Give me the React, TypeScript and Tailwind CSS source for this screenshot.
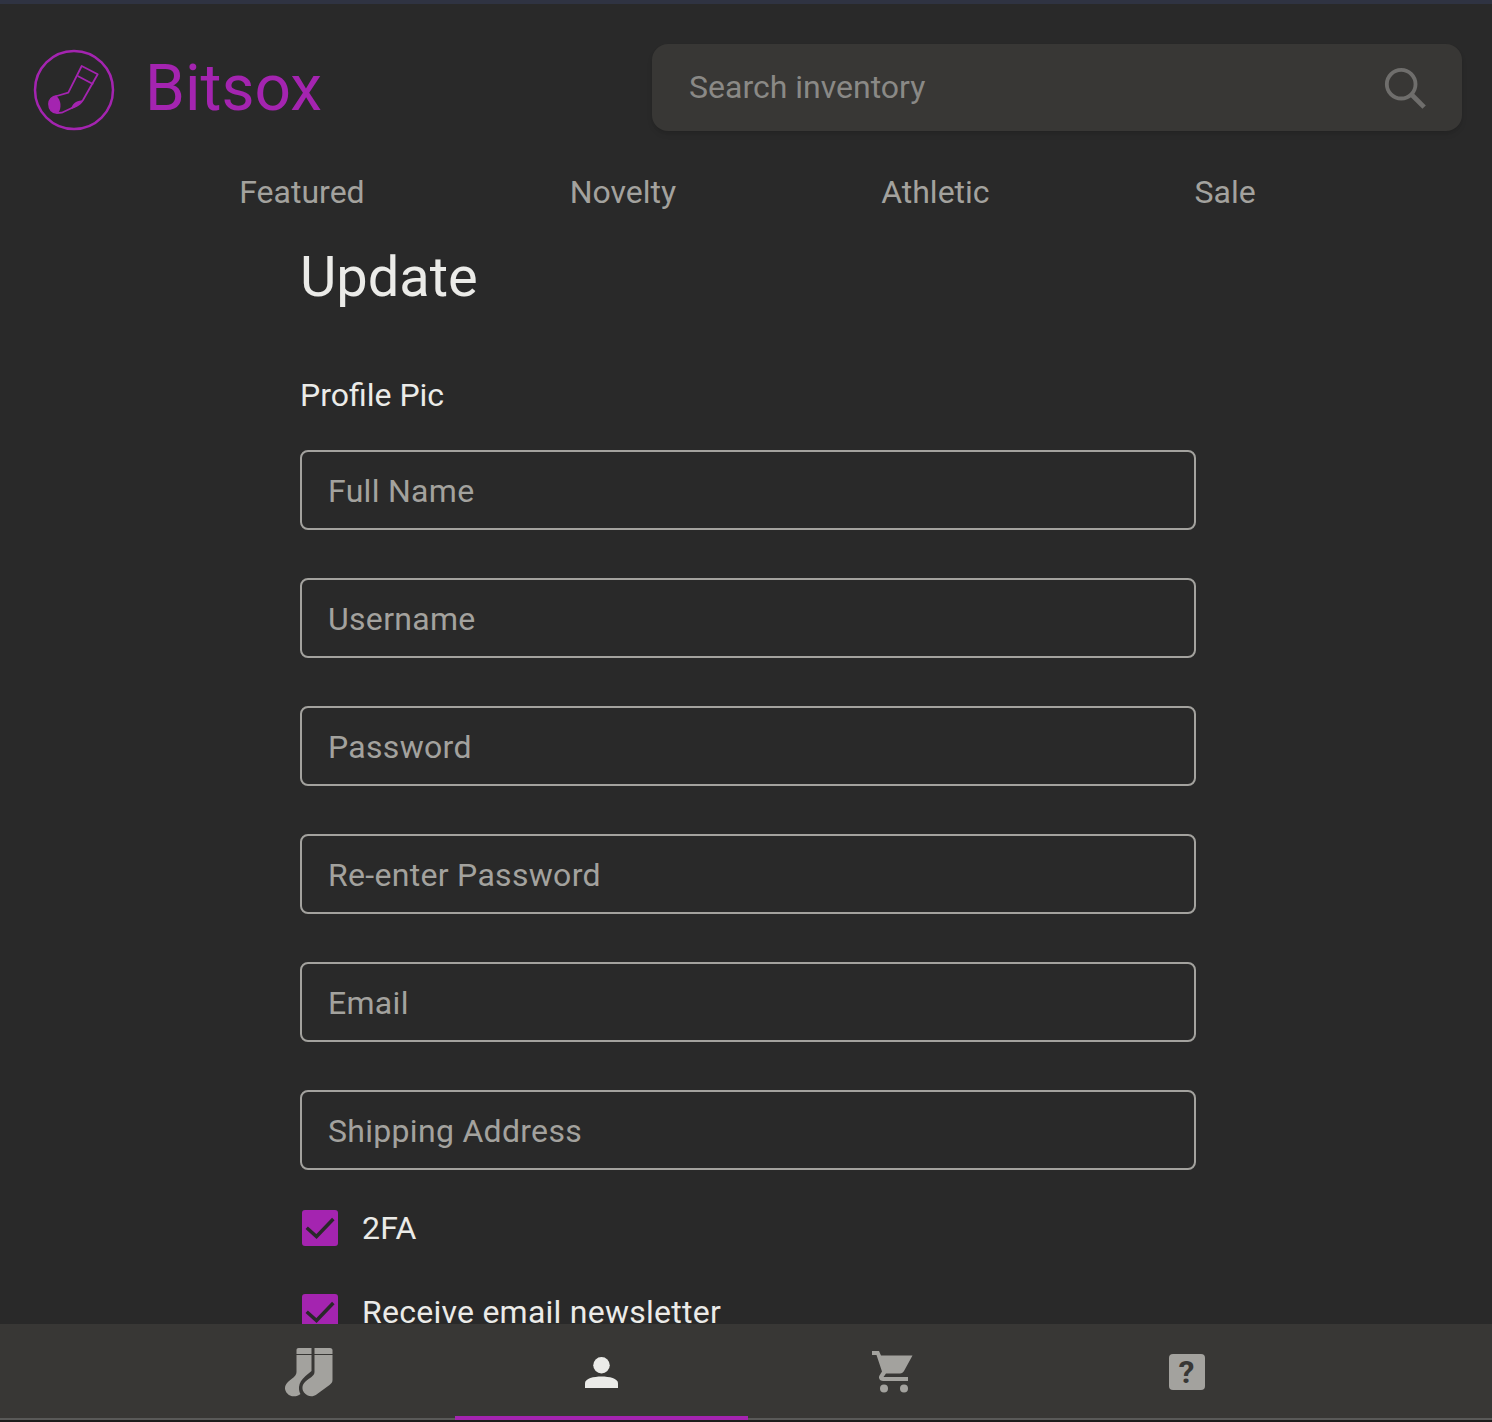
const fields = [
  "Full Name",
  "Username",
  "Password",
  "Re-enter Password",
  "Email",
  "Shipping Address",
];

const links = ["Featured", "Novelty", "Athletic", "Sale"];

function Logo() {
  return (
    <svg width="82" height="82" viewBox="0 0 82 82" fill="none" className="shrink-0">
      <circle cx="41" cy="41" r="39" stroke="#a424b0" strokeWidth="2.5" />
      <path
        d="M48.7 17 L64.7 25.3 L50 51 C48 54 46 56 42 57.5 L28.7 63.7 L24 64 C19 64 16 60 16 55 C16 51 19 47.5 23.7 47 L35.3 43.7 Z"
        stroke="#a424b0"
        strokeWidth="1.8"
        strokeLinejoin="round"
      />
      <path d="M44.7 27 L60.3 35.3" stroke="#a424b0" strokeWidth="1.8" />
      <path
        d="M23 46.7 C19 46.7 16 50.5 16 55.3 C16 60.5 19 64 24 63.7 L25.5 63.5 C28.5 59 28.5 51 23 46.7 Z"
        fill="#a424b0"
      />
      <path d="M38 60 C39 55 43 52 48.5 51.5 C47 55.5 43 59 38 60 Z" fill="#a424b0" />
    </svg>
  );
}

function Check() {
  return (
    <span className="flex h-9 w-9 shrink-0 items-center justify-center rounded-[3px] bg-[#a424b0]">
      <svg width="36" height="36" viewBox="0 0 36 36" fill="none">
        <path d="M4.7 17.7 L14.5 26.5 L31.3 9" stroke="#292929" strokeWidth="3.5" />
      </svg>
    </span>
  );
}

function CheckRow({ label }: { label: string }) {
  return (
    <label className="flex h-9 items-center gap-6 pl-0.5 text-[32px] tracking-[0.25px] text-[#ebebe8]">
      <Check />
      <span>{label}</span>
    </label>
  );
}

function SocksIcon() {
  return (
    <svg width="49" height="49" viewBox="0 0 48 49" fill="#a3a29e">
      <path d="M12 2 C12 .8 12.8 0 14 0 H27 V6 H12 Z" />
      <path d="M30 0 H45.5 C47.2 0 48 1 48 2.5 V6 H30 Z" />
      <path d="M12 7 H27 V23 L21 28 C17 31.5 15 35 14.5 39 C14.3 42 15 44.5 16 46 C13 48.5 9 49 5.5 47.5 C1.5 45.5 -0.5 41 1 37.5 C2 35 4.5 33 7 31 C10.5 28.5 12 26.5 12 24 Z" />
      <path d="M30 7 H48 V32 C48 34 47 35.5 45 37 L32 46.5 C28 49.5 22.5 48.5 19.5 44.5 C17 41 17.5 36.5 21 33.5 C25 30 30 28 30 24 Z" />
    </svg>
  );
}

export default function App() {
  return (
    <div
      className="flex h-screen flex-col overflow-hidden border-t-4 border-[#2f3342] bg-[#292929]"
      style={{ fontFamily: "Roboto, sans-serif" }}
    >
      <main className="min-h-0 flex-1 overflow-hidden">
        <header className="flex items-center justify-between pl-[33px] pr-[30px] pt-10">
          <div className="flex translate-y-[2px] items-center gap-[30px]">
            <Logo />
            <span className="-translate-y-px text-[64px] leading-none text-[#a424b0]">Bitsox</span>
          </div>
          <div className="flex h-[87px] w-[810px] items-center justify-between rounded-2xl bg-[#383735] pl-[37px] pr-[35px] shadow-md">
            <span className="-translate-y-px text-[32px] text-[#8a8986]">Search inventory</span>
            <svg width="44" height="44" viewBox="0 0 46 46" fill="none" stroke="#6f6e6c" strokeWidth="4">
              <circle cx="19" cy="19" r="15" />
              <path d="M29.5 29.5 L43 43" strokeWidth="5" />
            </svg>
          </div>
        </header>

        <nav className="mt-[38px] flex justify-center gap-[205px] pl-[3px] text-[32px] leading-[46px] text-[#a3a29e]">
          {links.map((link) => (
            <span key={link}>{link}</span>
          ))}
        </nav>

        <div className="ml-[300px] mt-[26px] w-[896px]">
          <h1 className="text-[56px] font-normal leading-[72px] text-[#ebebe8]">Update</h1>
          <p className="mt-[59px] text-[32px] leading-[46px] text-[#ebebe8]">Profile Pic</p>
          <div className="mt-[32px] flex flex-col gap-12">
            {fields.map((field) => (
              <div
                key={field}
                className="flex h-20 items-center rounded-lg border-2 border-[#a3a29e] px-[26px] pt-[2px] text-[32px] tracking-[0.3px] text-[#a3a29e]"
              >
                {field}
              </div>
            ))}
          </div>
          <div className="mt-10 flex flex-col gap-12">
            <CheckRow label="2FA" />
            <CheckRow label="Receive email newsletter" />
          </div>
        </div>
      </main>

      <footer className="h-[98px] shrink-0 bg-[#1c1c1c]">
        <div className="flex h-24 justify-center border-b-2 border-[#595958] bg-[#383735] pl-1">
          <div className="flex h-24 w-[293px] shrink-0 items-center justify-center">
            <SocksIcon />
          </div>
          <div className="flex h-24 w-[293px] shrink-0 items-center justify-center border-b-4 border-[#a424b0] pt-[6px]">
            <svg width="33" height="33" viewBox="0 0 34 34" fill="#ebebe8">
              <circle cx="17" cy="8.5" r="8.5" />
              <path d="M0 32 V27 C0 22 9 20 17 20 C25 20 34 22 34 27 V32 Z" />
            </svg>
          </div>
          <div className="flex h-24 w-[293px] shrink-0 items-center justify-center pr-1">
            <svg width="42" height="42" viewBox="0 0 42 42" fill="#a3a29e">
              <path d="M0 0 H7 L9 4.5 H40.5 L32 20 C31 21.5 30 22.5 28 22.5 H14 L11.5 26 H36 V30 H11 C8 30 6 27 7.5 24.5 L10 20.5 L4.5 4 H0 Z" />
              <circle cx="12" cy="37.5" r="4" />
              <circle cx="32" cy="37.5" r="4" />
            </svg>
          </div>
          <div className="flex h-24 w-[293px] shrink-0 items-center justify-center pr-0.5">
            <div className="flex h-9 w-9 items-center justify-center rounded bg-[#a3a29e] text-[32px] font-bold leading-none text-[#383735]">
              ?
            </div>
          </div>
        </div>
      </footer>
    </div>
  );
}
